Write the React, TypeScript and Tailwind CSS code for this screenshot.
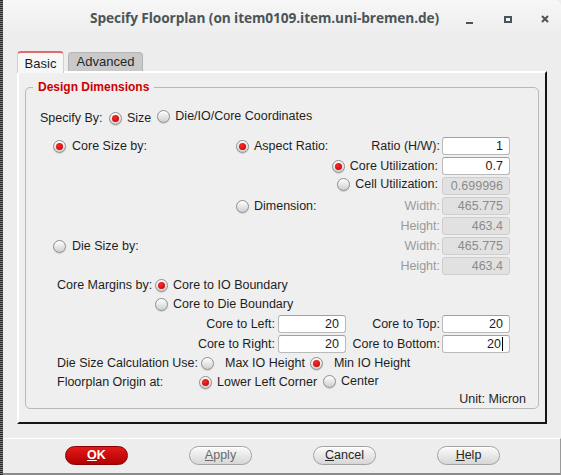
import React, { type ReactElement, type ReactNode } from 'react'

function Radio ({ on = false }: { on?: boolean }): ReactElement {
	return (
		<span className="inline-flex w-[13px] h-[13px] shrink-0 items-center justify-center rounded-full border border-[#8e8e8e] bg-[linear-gradient(#ffffff,#cfcfcf)] shadow-[0_1px_1px_rgba(0,0,0,0.12)]">
			{on && <span className="w-[7px] h-[7px] rounded-full bg-[radial-gradient(circle_at_40%_35%,#ff2a2a,#b80000)]" />}
		</span>
	)
}

function RadioItem ({ on = false, gap = 'gap-[5px]', children }: { on?: boolean, gap?: string, children: ReactNode }): ReactElement {
	return (
		<span className={`inline-flex items-center ${gap}`}>
			<Radio on={on} />
			<span>{children}</span>
		</span>
	)
}

function Field ({ value, disabled = false, caret = false }: { value: string, disabled?: boolean, caret?: boolean }): ReactElement {
	return (
		<div className={`w-[68px] h-[18px] shrink-0 flex items-center justify-end pr-[6px] rounded-[3px] border ${disabled ? 'bg-[#e1e1e1] border-[#cdcdcd] text-[#8c8c8c]' : 'bg-white border-[#b9b9b9] border-t-[#a0a0a0] text-[#1c1c1c]'}`}>
			{value}
			{caret && <span className="ml-[1px] w-[1px] h-[14px] bg-black" />}
		</div>
	)
}

function SizeRow ({ left, mid, right, field }: { left?: ReactNode, mid?: ReactNode, right?: ReactNode, field: ReactNode }): ReactElement {
	return (
		<div className="flex items-center h-[20px]">
			<div className="w-[210px] pl-[27px] flex items-center">{left}</div>
			<div className="w-[204px] flex items-center justify-between">
				<div className="flex items-center">{mid}</div>
				<div className="flex items-center">{right}</div>
			</div>
			<div className="ml-[2px]">{field}</div>
		</div>
	)
}

function Btn ({ children, primary = false, dim = false }: { children: ReactNode, primary?: boolean, dim?: boolean }): ReactElement {
	return (
		<button
			type="button"
			className={`w-[63px] h-[19px] rounded-full text-[12.5px] leading-none flex items-center justify-center ${primary
				? 'bg-[linear-gradient(#e21a1a,#b40000)] border border-[#8a0000] text-white font-bold'
				: `bg-[linear-gradient(#fbfbfb,#d6d6d6)] border border-[#a2a2a2] shadow-[0_1px_0_#ffffff_inset] ${dim ? 'text-[#6a6a6a]' : 'text-[#262626]'}`}`}
		>
			{children}
		</button>
	)
}

export default function App (): ReactElement {
	return (
		<div className="w-[561px] h-[475px] flex bg-[#ededed] overflow-hidden font-['Liberation_Sans',Arial,sans-serif] text-[12.5px] text-[#1e1e1e]">
			{/* window edge */}
			<div className="w-[3px] h-full shrink-0 bg-[repeating-linear-gradient(0deg,#2a2a2a_0px,#2a2a2a_1px,#7a7a7a_1px,#7a7a7a_2px)]" />

			<div className="flex-1 flex flex-col">
				{/* title bar */}
				<div className="h-[38px] shrink-0 flex items-center bg-[linear-gradient(#f7f7f7,#ececec)] rounded-tr-[6px]">
					<span className="pl-[87px] -mt-[1px] text-[13.7px] font-bold text-[#4b5559] font-['Open_Sans',sans-serif] tracking-[-0.1px]">
						{'Specify Floorplan (on item0109.item.uni-bremen.de)'}
					</span>
					<div className="ml-auto flex items-center pr-[12px]">
						<span className="w-[7px] h-[2px] mt-[8px] bg-[#4b5559]" />
						<span className="ml-[31px] w-[8px] h-[7px] border-2 border-[#4b5559]" />
						<svg className="ml-[29px]" width="8" height="8" viewBox="0 0 8 8">
							<path d="M1 1 L7 7 M7 1 L1 7" stroke="#4b5559" strokeWidth="2" />
						</svg>
					</div>
				</div>

				{/* tabs */}
				<div className="mt-[13px] ml-[14px] flex items-end h-[20px] gap-[4px] relative z-10">
					<div className="h-[22px] -mb-[2px] w-[47px] flex items-start justify-center pt-[1px] bg-[#f7f7f7] border-t-2 border-x border-t-[#e06a6a] border-x-[#d0d0d0] rounded-t-[4px] text-[13px] text-[#1a1a1a]">
						{'Basic'}
					</div>
					<div className="h-[19px] w-[75px] flex items-center justify-center bg-[#c9c9c9] border border-b-0 border-[#b4b4b4] rounded-t-[4px] text-[13px] text-[#262626]">
						{'Advanced'}
					</div>
				</div>

				{/* tab panel */}
				<div className="ml-[14px] w-[530px] h-[353px] shrink-0 flex flex-col border-t-2 border-l-2 border-r-2 border-b-2 border-t-white border-l-white border-r-[#161616] border-b-[#161616] bg-[#efefef]">
					<fieldset className="mx-[6px] mt-[6px] h-[330px] border border-[#b8b8b8] rounded-[5px]">
						<legend className="ml-[7px] px-[5px] text-[12px] font-bold text-[#cc0000] leading-[16px]">{'Design Dimensions'}</legend>

						<div className="mt-[13px] flex items-center h-[20px] pl-[14px]">
							<span className="w-[69px]">{'Specify By:'}</span>
							<RadioItem on>{'Size'}</RadioItem>
							<span className="ml-[6px]"><RadioItem>{'Die/IO/Core Coordinates'}</RadioItem></span>
						</div>

						<div className="mt-[8px]">
							<SizeRow
								left={<RadioItem on gap="gap-[6px]">{'Core Size by:'}</RadioItem>}
								mid={<RadioItem on>{'Aspect Ratio:'}</RadioItem>}
								right={<span>{'Ratio (H/W):'}</span>}
								field={<Field value="1" />}
							/>
							<SizeRow
								right={<span className="pr-[2px]"><RadioItem on>{'Core Utilization:'}</RadioItem></span>}
								field={<Field value="0.7" />}
							/>
							<SizeRow
								right={<span className="pr-[2px]"><RadioItem>{'Cell Utilization:'}</RadioItem></span>}
								field={<Field value="0.699996" disabled />}
							/>
							<SizeRow
								mid={<RadioItem>{'Dimension:'}</RadioItem>}
								right={<span className="text-[#9a9a9a]">{'Width:'}</span>}
								field={<Field value="465.775" disabled />}
							/>
							<SizeRow
								right={<span className="text-[#9a9a9a]">{'Height:'}</span>}
								field={<Field value="463.4" disabled />}
							/>
							<SizeRow
								left={<RadioItem gap="gap-[6px]">{'Die Size by:'}</RadioItem>}
								right={<span className="text-[#9a9a9a]">{'Width:'}</span>}
								field={<Field value="465.775" disabled />}
							/>
							<SizeRow
								right={<span className="text-[#9a9a9a]">{'Height:'}</span>}
								field={<Field value="463.4" disabled />}
							/>
						</div>

						<div className="flex items-center h-[19px] pl-[31px]">
							<span className="w-[98px]">{'Core Margins by:'}</span>
							<RadioItem on>{'Core to IO Boundary'}</RadioItem>
						</div>
						<div className="flex items-center h-[19px] pl-[129px]">
							<RadioItem>{'Core to Die Boundary'}</RadioItem>
						</div>

						<div className="flex items-center h-[20px]">
							<span className="w-[249px] text-right">{'Core to Left:'}</span>
							<span className="ml-[3px]"><Field value="20" /></span>
							<span className="w-[94px] text-right">{'Core to Top:'}</span>
							<span className="ml-[2px]"><Field value="20" /></span>
						</div>
						<div className="flex items-center h-[20px]">
							<span className="w-[249px] text-right">{'Core to Right:'}</span>
							<span className="ml-[3px]"><Field value="20" /></span>
							<span className="w-[94px] text-right">{'Core to Bottom:'}</span>
							<span className="ml-[2px]"><Field value="20" caret /></span>
						</div>

						<div className="flex items-center h-[19px] pl-[31px]">
							<span className="w-[144px]">{'Die Size Calculation Use:'}</span>
							<RadioItem gap="gap-[11px]">{'Max IO Height'}</RadioItem>
							<span className="ml-[5px]"><RadioItem on gap="gap-[11px]">{'Min IO Height'}</RadioItem></span>
						</div>
						<div className="flex items-center h-[19px] pl-[31px]">
							<span className="w-[142px]">{'Floorplan Origin at:'}</span>
							<RadioItem on>{'Lower Left Corner'}</RadioItem>
							<span className="ml-[6px]"><RadioItem>{'Center'}</RadioItem></span>
						</div>
						<div className="flex items-center justify-end h-[15px] pr-[12px]">
							{'Unit: Micron'}
						</div>
					</fieldset>
				</div>

				{/* button bar */}
				<div className="mt-[14px] flex-1 flex items-center gap-[61px] pl-[62px] pb-[1px] border-t border-t-white border-b-2 border-b-[#8a8a8a] border-r border-r-[#9a9a9a]">
					<Btn primary><span><span className="underline">{'O'}</span>{'K'}</span></Btn>
					<Btn dim><span><span className="underline">{'A'}</span>{'pply'}</span></Btn>
					<Btn><span><span className="underline">{'C'}</span>{'ancel'}</span></Btn>
					<Btn><span><span className="underline">{'H'}</span>{'elp'}</span></Btn>
				</div>
			</div>
		</div>
	)
}
